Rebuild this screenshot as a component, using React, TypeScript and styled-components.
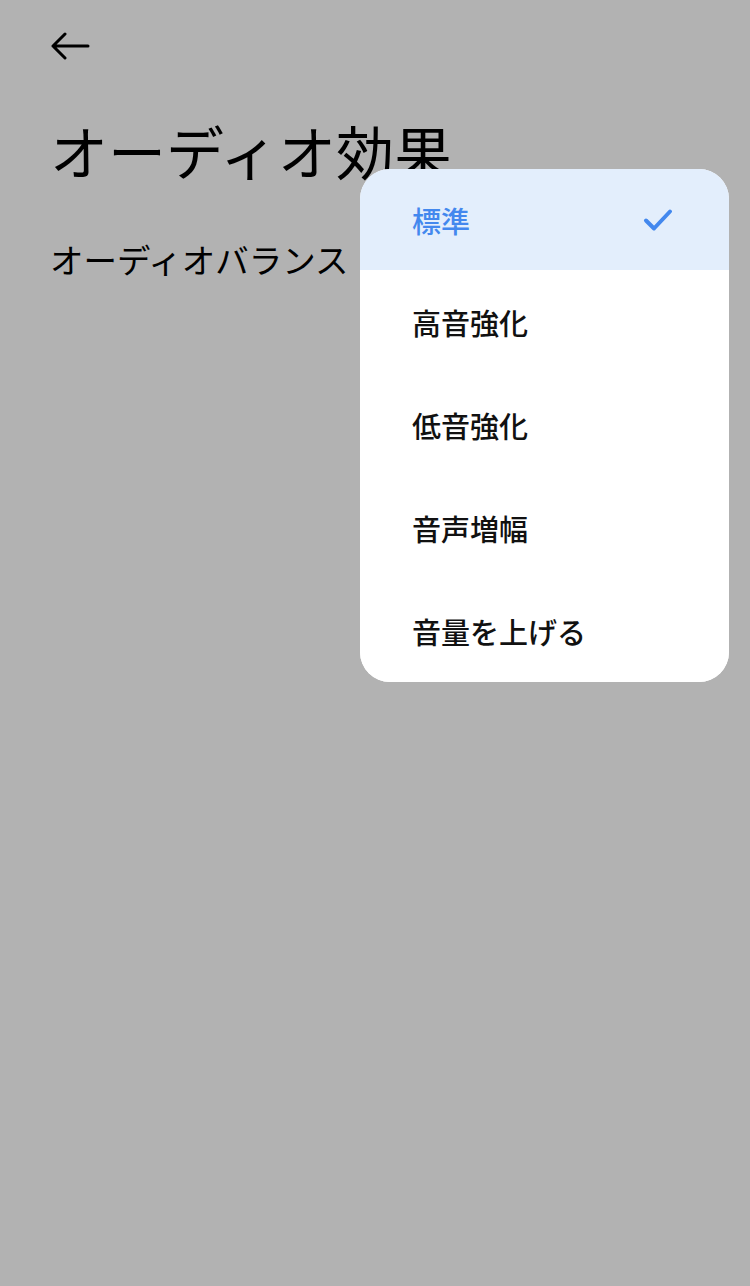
import React from "react";
import styled, { createGlobalStyle } from "styled-components";

const GlobalStyle = createGlobalStyle`
  html, body {
    margin: 0;
    padding: 0;
    background: #b2b2b2;
    font-family: "Noto Sans CJK JP", "Noto Sans", sans-serif;
  }
`;

const Page = styled.div`
  position: relative;
  width: 750px;
  height: 1286px;
  background: #b2b2b2;
  overflow: hidden;
`;

const Header = styled.div`
  padding: 26px 0 0 50px;
  display: flex;
  flex-direction: column;
`;

const BackButton = styled.button`
  width: 40px;
  height: 40px;
  padding: 0;
  border: none;
  background: none;
  display: flex;
  align-items: center;
  justify-content: flex-start;
`;

const Title = styled.h1`
  margin: 44px 0 0 0;
  font-size: 58px;
  font-weight: 400;
  line-height: 1.4;
  color: #000;
`;

const Row = styled.div`
  margin-top: 45px;
  font-size: 33.5px;
  line-height: 1.4;
  color: #000;
`;

const Menu = styled.ul`
  position: absolute;
  top: 169px;
  left: 360px;
  width: 369px;
  margin: 0;
  padding: 0;
  list-style: none;
  background: #fff;
  border-radius: 30px;
  overflow: hidden;
`;

const Item = styled.li<{ $selected?: boolean }>`
  height: ${({ $selected }) => ($selected ? 101 : 103)}px;
  padding: 0 56px 0 52px;
  display: flex;
  align-items: center;
  justify-content: space-between;
  font-size: 29px;
  font-weight: 500;
  color: ${({ $selected }) => ($selected ? "#4388ee" : "#111")};
  background: ${({ $selected }) => ($selected ? "#e3eefc" : "#fff")};
`;

const options = ["標準", "高音強化", "低音強化", "音声増幅", "音量を上げる"];

export default function App() {
  return (
    <Page>
      <GlobalStyle />
      <Header>
        <BackButton>
          <svg width="40" height="28" viewBox="0 0 40 28" fill="none">
            <path d="M38 14H3M15 2L3 14l12 12" stroke="#000" strokeWidth="3" strokeLinecap="round" strokeLinejoin="round" />
          </svg>
        </BackButton>
        <Title>オーディオ効果</Title>
        <Row>オーディオバランス</Row>
      </Header>
      <Menu>
        {options.map((o, i) => (
          <Item key={o} $selected={i === 0}>
            <span>{o}</span>
            {i === 0 && (
              <svg width="30" height="24" viewBox="0 0 30 24" fill="none">
                <path d="M3 12.5l8 8L27 3.5" stroke="#4388ee" strokeWidth="4" strokeLinecap="round" strokeLinejoin="round" />
              </svg>
            )}
          </Item>
        ))}
      </Menu>
    </Page>
  );
}
